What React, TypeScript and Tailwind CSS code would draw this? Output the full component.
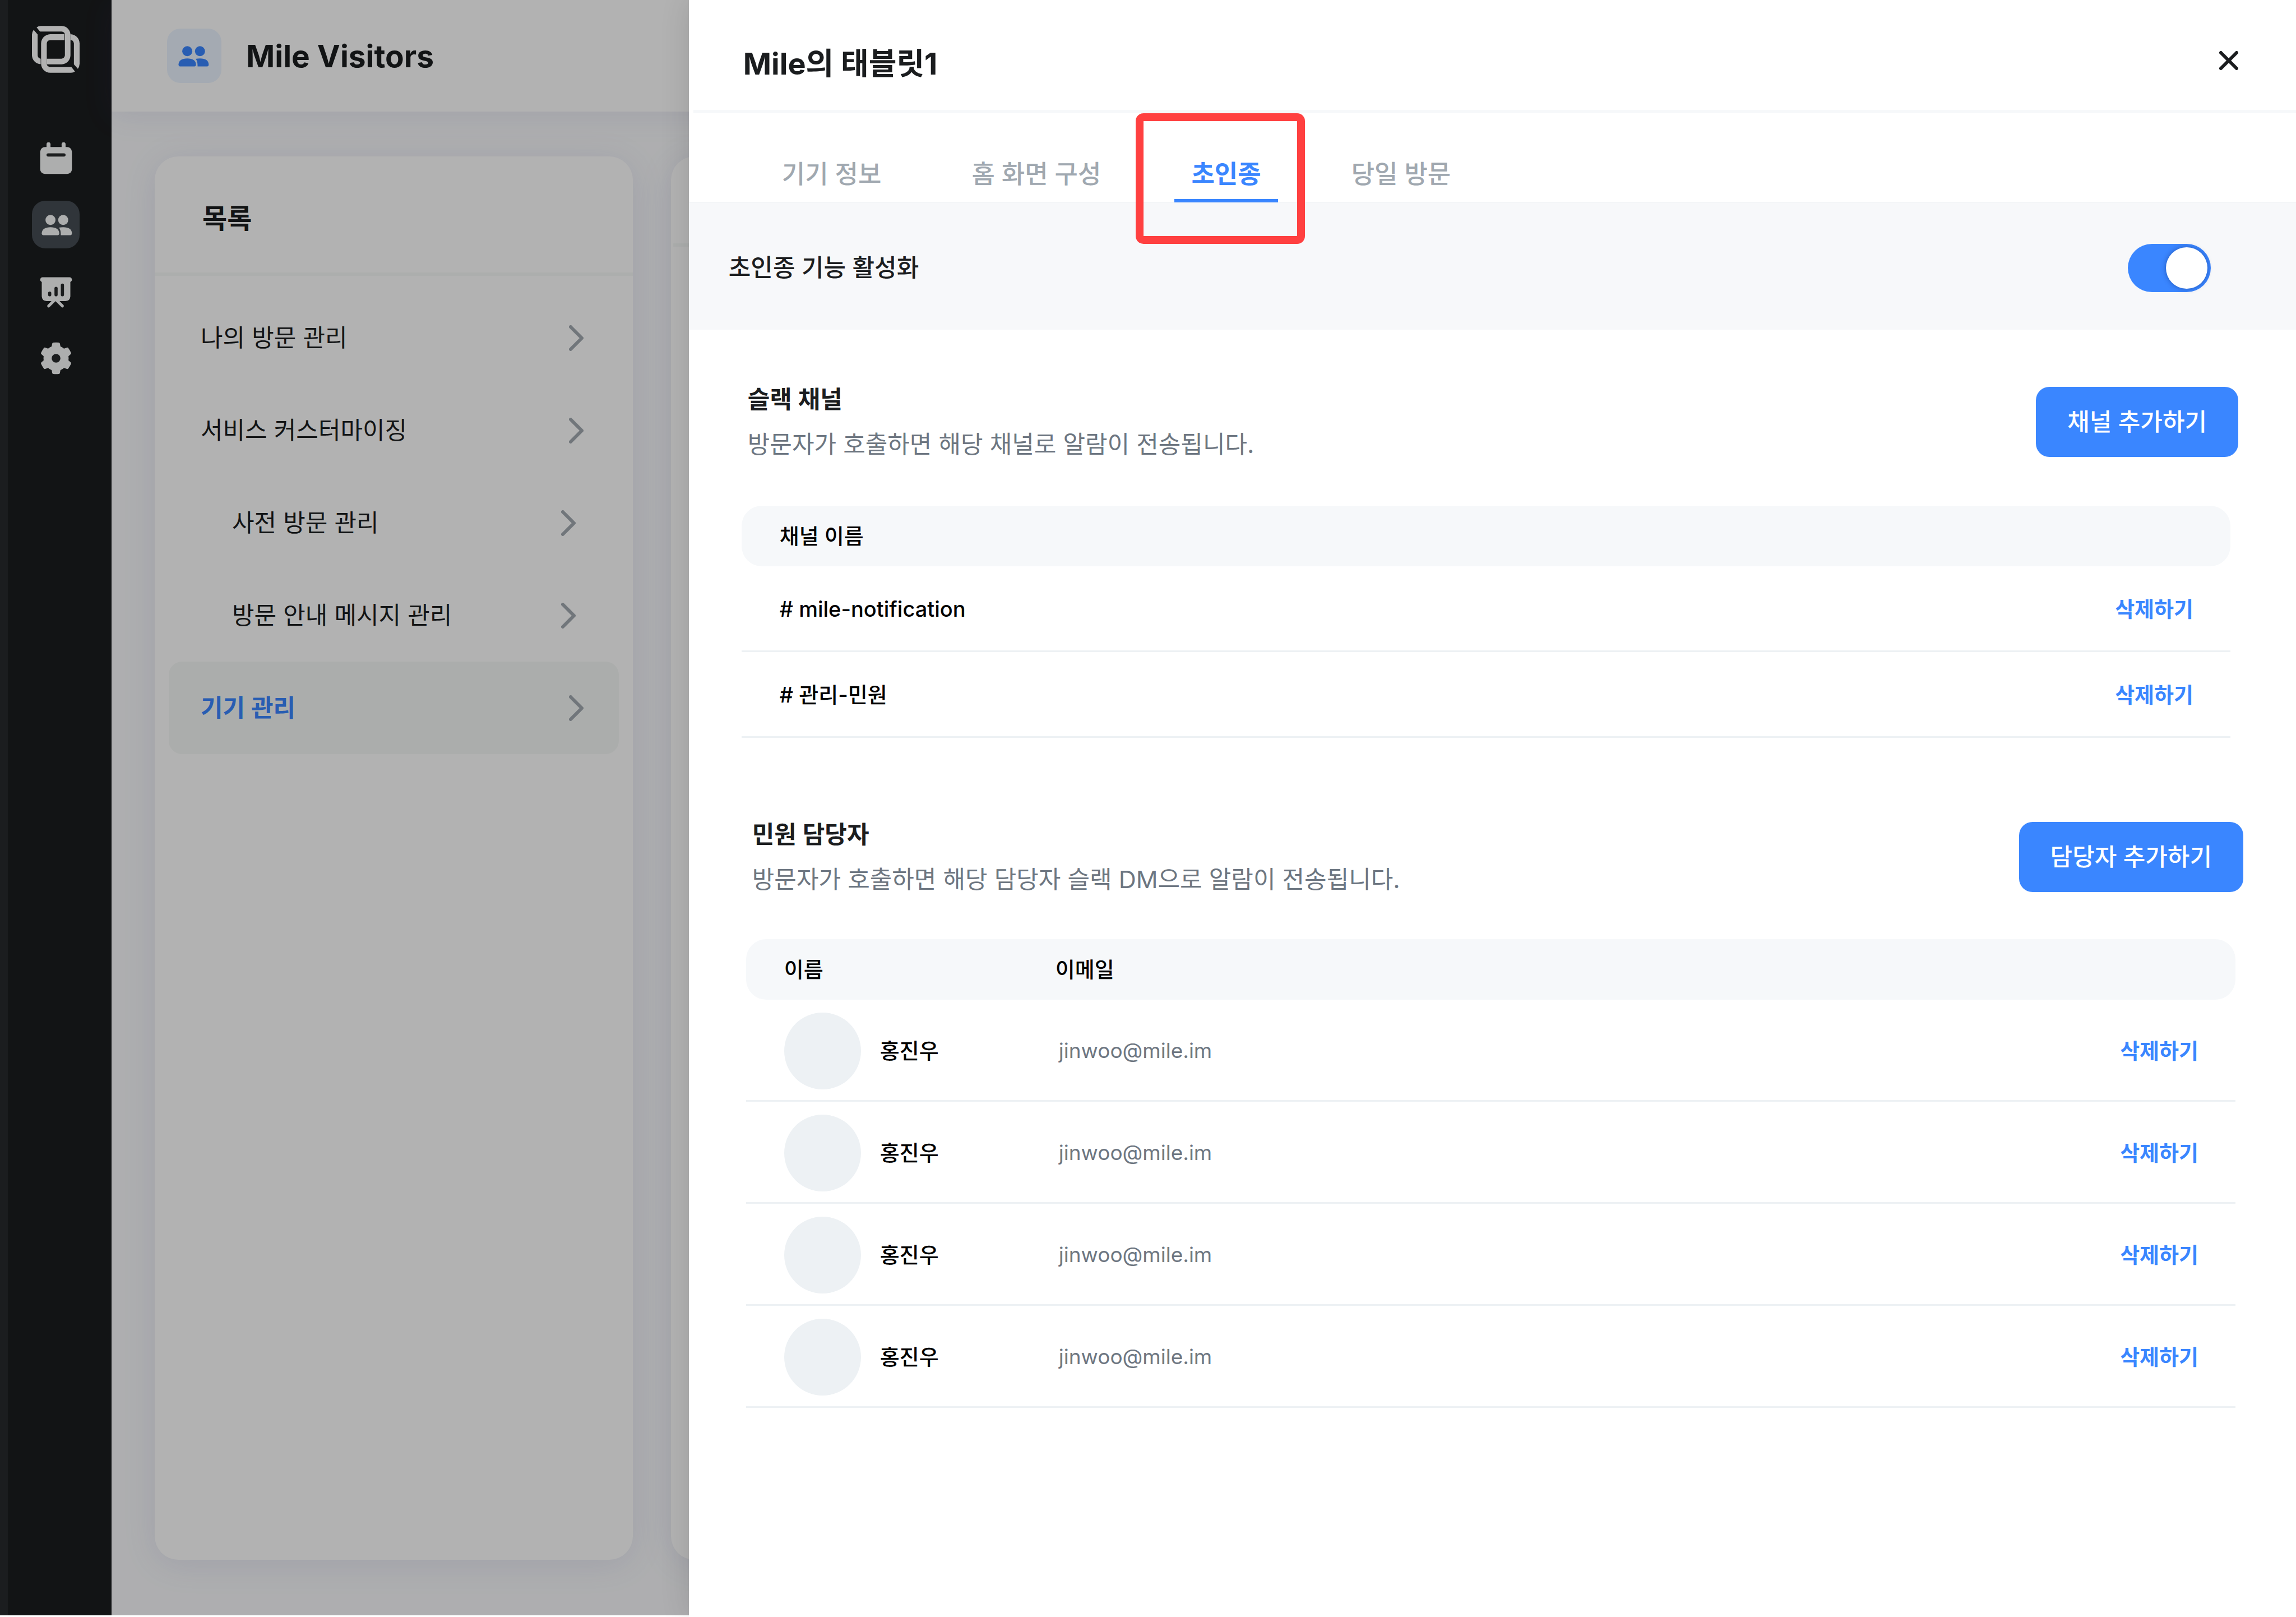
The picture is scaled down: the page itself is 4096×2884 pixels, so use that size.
import React, { useState } from "react";

type IconProps = { className?: string };

function Logo() {
  return (
    <svg viewBox="60 72 360 354" className="h-[84px] w-[85px] text-white" fill="currentColor" aria-hidden="true">
      <path d="M95 83Q108 73 127 72H285C322 73 350 102 351 137V295C350 332 322 361 285 362H172V320H283Q306 317 309 295V137Q306 117 283 115H121Z" />
      <path d="M73 102L103 137V295Q105 317 126 320V361C89 359 61 331 60 295V137Q61 117 73 102Z" />
      <path d="M305 135H198C160 136 130 166 129 204V358C130 396 160 425 198 426H355Q372 425 385 416L358 382H198Q177 380 172 362V204Q174 181 198 179H305Z" />
      <path d="M351 135C390 137 419 166 420 204V358Q419 380 407 396L377 362V204Q374 180 351 178Z" />
    </svg>
  );
}

function CalendarIcon({ className }: IconProps) {
  return (
    <svg viewBox="96 24 288 288" className={className} fill="currentColor" aria-hidden="true">
      <rect x="120" y="84" width="240" height="204" rx="36" />
      <rect x="168" y="48" width="30" height="60" rx="15" />
      <rect x="282" y="48" width="30" height="60" rx="15" />
      <rect x="168" y="132" width="144" height="24" rx="12" fill="#282a2c" />
    </svg>
  );
}

function PeopleIcon({ className }: IconProps) {
  return (
    <svg viewBox="96 528 288 288" className={className} fill="currentColor" aria-hidden="true">
      <circle cx="198" cy="635" r="38" />
      <circle cx="294" cy="635" r="38" />
      <path d="M132 737C132 706 158 690 198 690S264 706 264 737Q264 750 252 750H144Q132 750 132 737Z" />
      <path d="M261 693Q276 690 294 690C336 690 360 706 360 737Q360 750 348 750H276C276 725 274 708 261 693Z" />
    </svg>
  );
}

function BoardIcon({ className }: IconProps) {
  return (
    <svg viewBox="96 42 288 288" className={className} fill="currentColor" aria-hidden="true">
      <rect x="120" y="78" width="240" height="36" rx="18" />
      <path d="M132 100H348V222Q346 256 312 258H168Q134 256 132 222Z" />
      <path d="M184 295L230 249M288 295L242 249" stroke="currentColor" strokeWidth="22" strokeLinecap="round" />
      <g fill="#282a2c">
        <rect x="180" y="186" width="24" height="36" rx="12" />
        <rect x="228" y="150" width="24" height="72" rx="12" />
        <rect x="276" y="126" width="24" height="96" rx="12" />
      </g>
    </svg>
  );
}

function GearIcon({ className }: IconProps) {
  const tooth = "M-34 -86L-29 -111Q-28 -117 -21 -119Q0 -121 21 -119Q28 -117 29 -111L34 -86Z";
  return (
    <svg viewBox="-144 -144 288 288" className={className} fill="currentColor" aria-hidden="true">
      <circle r="95" />
      {[0, 60, 120, 180, 240, 300].map((a) => (
        <path key={a} d={tooth} transform={`rotate(${a})`} />
      ))}
      <circle r="33" fill="#282a2c" />
    </svg>
  );
}

function Chevron() {
  return (
    <svg viewBox="0 0 26 46" className="h-[46px] w-[26px] text-[#a3aab1]" fill="none" stroke="currentColor" strokeWidth="6" strokeLinecap="round" strokeLinejoin="round" aria-hidden="true">
      <path d="M3 3L23 23L3 43" />
    </svg>
  );
}

const nav = [
  { label: "캘린더", Icon: CalendarIcon, active: false },
  { label: "방문자", Icon: PeopleIcon, active: true },
  { label: "통계", Icon: BoardIcon, active: false },
  { label: "설정", Icon: GearIcon, active: false },
];

const menu = [
  { label: "나의 방문 관리", sub: false, active: false },
  { label: "서비스 커스터마이징", sub: false, active: false },
  { label: "사전 방문 관리", sub: true, active: false },
  { label: "방문 안내 메시지 관리", sub: true, active: false },
  { label: "기기 관리", sub: false, active: true },
];

const tabs = ["기기 정보", "홈 화면 구성", "초인종", "당일 방문"];
const channels = ["# mile-notification", "# 관리-민원"];
const managers = [1, 2, 3, 4].map((id) => ({ id, name: "홍진우", email: "jinwoo@mile.im" }));

function Sidebar() {
  return (
    <aside className="flex w-[199px] shrink-0 flex-col items-center bg-[#1b1d1f] pt-[46px]">
      <Logo />
      <nav className="mt-[109px] flex flex-col gap-[34px]">
        {nav.map(({ label, Icon, active }) => (
          <button
            key={label}
            type="button"
            aria-label={label}
            className={`flex size-[85px] items-center justify-center rounded-[24px] text-[#f8faf9] ${active ? "bg-[#454c53]" : ""}`}
          >
            <Icon className="size-[68px]" />
          </button>
        ))}
      </nav>
    </aside>
  );
}

function Background() {
  return (
    <div className="relative col-start-1 row-start-1 mb-[3px] flex min-w-0 overflow-hidden">
      <Sidebar />
      <div className="flex min-w-0 flex-1 flex-col bg-[#f9fafc]">
        <header className="relative flex h-[199px] shrink-0 items-center bg-white pl-[99px] shadow-[0_8px_50px_rgba(90,90,170,0.1)]">
          <span className="flex size-[97px] items-center justify-center rounded-[24px] bg-[#ebf4ff] pr-[6px] text-[#3a86ff]">
            <PeopleIcon className="size-[68px]" />
          </span>
          <h1 className="ml-[44px] text-[55px] leading-[72px] font-bold">Mile Visitors</h1>
        </header>
        <main className="flex flex-1 gap-[68px] pt-[80px] pb-[99px] pl-[77px]">
          <section className="w-[853px] shrink-0 rounded-[42px] bg-white shadow-[0_8px_60px_rgba(90,90,170,0.12)]">
            <h2 className="flex h-[213px] items-center border-b-6 border-[#f7f9f8] pt-[14px] pl-[85px] text-[48px] font-bold">목록</h2>
            <ul className="px-[25px] pt-[28px]">
              {menu.map(({ label, sub, active }) => (
                <li key={label}>
                  <a
                    href="#"
                    className={`flex h-[165px] items-center justify-between rounded-[24px] text-[43px] ${sub ? "pr-[77px] pl-[113px]" : "pr-[63px] pl-[57px]"} ${active ? "bg-[#f5f8f6] font-semibold text-[#3a86ff]" : ""}`}
                  >
                    {label}
                    <Chevron />
                  </a>
                </li>
              ))}
            </ul>
          </section>
          <section className="flex-1 rounded-l-[42px] bg-white shadow-[0_8px_60px_rgba(90,90,170,0.12)]">
            <div className="ml-[4px] h-[161px] border-b-6 border-[#f7f9f8]" />
          </section>
        </main>
      </div>
      <div className="absolute inset-y-0 right-0 left-[14px] bg-black/30" />
    </div>
  );
}

function SectionHead({ title, text, action }: { title: string; text: string; action: string }) {
  return (
    <div className="flex items-center justify-between pl-[11px]">
      <div className="text-[43px] leading-[80px]">
        <h3 className="font-semibold">{title}</h3>
        <p className="text-[#6d7681]">{text}</p>
      </div>
      <button type="button" className="h-[125px] rounded-[24px] bg-[#3a86ff] px-[56px] text-[43px] font-medium text-white">
        {action}
      </button>
    </div>
  );
}

function DeleteCell() {
  return (
    <td className="border-b-3 border-[#edf1f4] pt-[3px] pr-[66px] text-right">
      <button type="button" className="font-semibold text-[#3a86ff]">삭제하기</button>
    </td>
  );
}

function Drawer() {
  const [tab, setTab] = useState("초인종");
  const [on, setOn] = useState(true);
  return (
    <div role="dialog" aria-label="Mile의 태블릿1" className="relative col-start-1 row-start-1 w-[70%] justify-self-end bg-white shadow-[0_0_50px_rgba(0,0,0,0.12)]">
      <header className="ml-[8px] flex h-[202px] items-center justify-between border-b-6 border-[#f6f8fa] pt-[20px] pr-[103px] pl-[89px]">
        <h2 className="pt-[12px] text-[54px] leading-[72px] font-bold">Mile의 태블릿1</h2>
        <button type="button" aria-label="닫기">
          <svg viewBox="0 0 34 34" className="size-[34px]" fill="none" stroke="#1b1d1f" strokeWidth="6" strokeLinecap="round" aria-hidden="true">
            <path d="M3 3L31 31M31 3L3 31" />
          </svg>
        </button>
      </header>
      <div role="tablist" className="flex h-[159px] gap-[101px] border-b border-[#edf0f2] pl-[136px]">
        {tabs.map((name) => (
          <button
            key={name}
            type="button"
            role="tab"
            aria-selected={tab === name}
            onClick={() => setTab(name)}
            className={`relative -mb-px border-b-6 px-[30px] pt-[64px] text-[45px] leading-[89px] ${tab === name ? "border-[#3a86ff] font-bold text-[#3a86ff]" : "border-transparent font-medium text-[#a0a8b0]"}`}
          >
            {name}
            {name === "초인종" && (
              <span className="pointer-events-none absolute top-0 -right-[48px] -left-[69px] z-10 h-[233px] rounded-[14px] border-14 border-[#ff4040]" />
            )}
          </button>
        ))}
      </div>
      <div className="flex h-[227px] items-center justify-between bg-[#f7f8fa] pt-[6px] pr-[152px] pl-[71px]">
        <label htmlFor="doorbell" className="text-[43px] font-medium">초인종 기능 활성화</label>
        <input
          id="doorbell"
          type="checkbox"
          role="switch"
          checked={on}
          onChange={(e) => setOn(e.target.checked)}
          className="flex h-[86px] w-[148px] appearance-none items-center rounded-full bg-[#cdd3d9] px-[6px] before:size-[74px] before:rounded-full before:bg-white before:shadow-[0_0_10px_rgba(0,20,80,0.4)] checked:justify-end checked:bg-[#3a86ff]"
        />
      </div>

      <section className="mr-[103px] ml-[94px] pt-[84px]">
        <SectionHead title="슬랙 채널" text="방문자가 호출하면 해당 채널로 알람이 전송됩니다." action="채널 추가하기" />
        <div className="mt-[70px] mr-[14px]">
          <table className="w-full border-separate border-spacing-0 text-left text-[38px] font-medium text-black">
            <thead>
              <tr className="h-[108px]">
                <th className="rounded-l-[36px] bg-[#f6f8fa] pl-[68px] font-medium">채널 이름</th>
                <th className="rounded-r-[36px] bg-[#f6f8fa]" aria-label="작업" />
              </tr>
            </thead>
            <tbody>
              {channels.map((c) => (
                <tr key={c} className="h-[153px]">
                  <td className="border-b-3 border-[#edf1f4] pt-[3px] pl-[68px]">{c}</td>
                  <DeleteCell />
                </tr>
              ))}
            </tbody>
          </table>
        </div>
      </section>

      <section className="mr-[94px] ml-[102px] pt-[132px]">
        <SectionHead title="민원 담당자" text="방문자가 호출하면 해당 담당자 슬랙 DM으로 알람이 전송됩니다." action="담당자 추가하기" />
        <div className="mt-[67px] mr-[14px]">
          <table className="w-full table-fixed border-separate border-spacing-0 text-left text-[38px] font-medium text-black">
            <thead>
              <tr className="h-[108px]">
                <th className="w-[552px] rounded-l-[36px] bg-[#f6f8fa] pl-[68px] font-medium">이름</th>
                <th className="bg-[#f6f8fa] font-medium">이메일</th>
                <th className="w-[400px] rounded-r-[36px] bg-[#f6f8fa]" aria-label="작업" />
              </tr>
            </thead>
            <tbody>
              {managers.map((m) => (
                <tr key={m.id} className="h-[182px]">
                  <td className="border-b-3 border-[#edf1f4] pt-[3px] pl-[68px]">
                    <span className="flex items-center gap-[34px]">
                      <span className="size-[137px] rounded-full bg-[#edf1f4]" />
                      {m.name}
                    </span>
                  </td>
                  <td className="border-b-3 border-[#edf1f4] pt-[3px] pl-[6px] text-[37px] font-normal text-[#6d7681]">{m.email}</td>
                  <DeleteCell />
                </tr>
              ))}
            </tbody>
          </table>
        </div>
      </section>
    </div>
  );
}

export default function App() {
  return (
    <div lang="ko" className="grid min-h-screen grid-cols-1 overflow-hidden bg-white font-[Inter,'Noto_Sans_CJK_KR',sans-serif] text-[#1b1d1f]">
      <Background />
      <Drawer />
    </div>
  );
}
